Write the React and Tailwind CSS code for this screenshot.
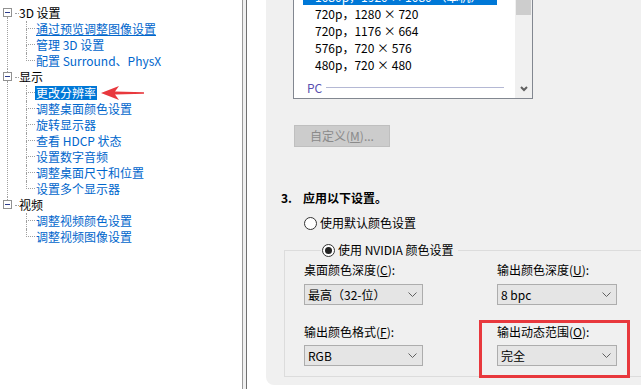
import React from 'react';

const tree = [
  {
    label: '3D 设置',
    children: [
      { text: '通过预览调整图像设置', hover: true },
      { text: '管理 3D 设置' },
      { text: '配置 Surround、PhysX' },
    ],
  },
  {
    label: '显示',
    children: [
      { text: '更改分辨率', selected: true },
      { text: '调整桌面颜色设置' },
      { text: '旋转显示器' },
      { text: '查看 HDCP 状态' },
      { text: '设置数字音频' },
      { text: '调整桌面尺寸和位置' },
      { text: '设置多个显示器' },
    ],
  },
  {
    label: '视频',
    children: [{ text: '调整视频颜色设置' }, { text: '调整视频图像设置' }],
  },
];

const modes = ['720p，1280 × 720', '720p，1176 × 664', '576p，720 × 576', '480p，720 × 480'];

const RedArrow = () => (
  <svg width="44" height="16" viewBox="0 0 44 16" className="ml-[4px] shrink-0">
    <path d="M0 8 L18 1 L14 6.5 L43 7.3 L43 8.7 L14 9.5 L18 15 Z" fill="#e8383d" />
  </svg>
);

const Chevron = () => (
  <svg width="9" height="6" viewBox="0 0 9 6">
    <polyline points="0.5,0.5 4.5,4.5 8.5,0.5" fill="none" stroke="#606060" strokeWidth="1" />
  </svg>
);

const TreeView = () => (
  <div className="pt-[5px] text-[12px] leading-[16px]">
    {tree.map((node, i) => {
      const last = i === tree.length - 1;
      return (
        <div key={node.label} className="flex">
          <div className="w-[15px] shrink-0 flex flex-col items-center">
            <div className={`h-[3px] w-px ${i > 0 ? 'border-l border-dotted border-[#a0a0a0]' : ''}`} />
            <div className="w-[9px] h-[9px] border border-[#919191] bg-white flex items-center justify-center">
              <div className="w-[5px] h-px bg-[#2d3c8c]" />
            </div>
            <div className={`flex-1 w-px ${last ? '' : 'border-l border-dotted border-[#a0a0a0]'}`} />
          </div>
          <div className="flex-1 flex flex-col">
            <div className="h-[16px] flex items-center">
              <div className="w-[4px] border-t border-dotted border-[#a0a0a0]" />
              <span className="text-black">{node.label}</span>
            </div>
            {node.children.map((c, j) => {
              const lastChild = j === node.children.length - 1;
              return (
                <div key={c.text} className="h-[16px] flex">
                  <div className="w-[11px] shrink-0" />
                  <div className="w-[9px] shrink-0 flex flex-col">
                    <div className="h-[8px] border-l border-b border-dotted border-[#a0a0a0]" />
                    <div className={`flex-1 ${lastChild ? '' : 'border-l border-dotted border-[#a0a0a0]'}`} />
                  </div>
                  <div className="flex items-center">
                    {c.selected ? (
                      <>
                        <span className="h-[14px] leading-[14px] px-px bg-[#0078d7] text-white">{c.text}</span>
                        <RedArrow />
                      </>
                    ) : (
                      <span className={`ml-px text-[#0066cc] whitespace-nowrap ${c.hover ? 'underline' : ''}`}>
                        {c.text}
                      </span>
                    )}
                  </div>
                </div>
              );
            })}
          </div>
        </div>
      );
    })}
  </div>
);

const Select = ({ value, width, gap = 'mt-[6px]' }) => (
  <div
    className={`${width} ${gap} h-[21px] flex items-center justify-between border border-[#adadad] bg-[#e5e5e5] pl-[3px] pr-[5px] text-black`}
  >
    <span>{value}</span>
    <Chevron />
  </div>
);

const Field = ({ label, hotkey, value, width, gap }) => (
  <div className="flex flex-col">
    <div className="h-[16px]">
      {label}(<span className="underline">{hotkey}</span>):
    </div>
    <Select value={value} width={width} gap={gap} />
  </div>
);

const Radio = ({ checked, label }) => (
  <div className="flex items-center h-[16px]">
    <div className="w-[13px] h-[13px] rounded-full border border-[#333] bg-white flex items-center justify-center">
      {checked && <div className="w-[7px] h-[7px] rounded-full bg-[#222]" />}
    </div>
    <span className="ml-[3px] text-black">{label}</span>
  </div>
);

export default function App() {
  return (
    <div className="w-[641px] h-[389px] overflow-hidden flex bg-white font-['Noto_Sans_CJK_SC',sans-serif] text-[12px] leading-[16px]">
      <div className="w-[243px] shrink-0 bg-white border-r border-[#9a9a9a]">
        <TreeView />
      </div>
      <div className="w-[3px] shrink-0 bg-[#f0f0f0]" />
      <div className="w-px shrink-0 bg-[#707070]" />
      <div className="flex-1 pl-[19px] bg-white">
        <div className="h-[385px] bg-[#f0f0f0] rounded-bl-[8px] flex flex-col">
          <div className="ml-[27px] w-[240px] h-[99px] shrink-0 bg-white border-x border-b border-[#828790] flex">
            <div className="flex-1 overflow-hidden pl-[9px] flex flex-col">
              <div className="-mt-[12px] h-[17px] shrink-0 w-[194px] bg-[#0078d7] text-white pl-[12px] leading-[17px] whitespace-nowrap">
                1080p，1920 × 1080 （本机）
              </div>
              {modes.map((m) => (
                <div key={m} className="h-[17px] shrink-0 pl-[12px] leading-[17px] text-black whitespace-nowrap">
                  {m}
                </div>
              ))}
              <div className="mt-[6px] h-[17px] shrink-0 flex items-center pl-[4px] pr-[11px]">
                <span className="text-[#5a4fb0]">PC</span>
                <div className="flex-1 h-px ml-[4px] bg-[#b4b8d4]" />
              </div>
            </div>
            <div className="w-[17px] shrink-0 bg-[#f0f0f0] flex flex-col">
              <div className="h-[15px] mx-px bg-[#cdcdcd]" />
              <div className="flex-1" />
              <div className="h-[19px] flex items-center justify-center">
                <svg width="8" height="6" viewBox="0 0 8 6">
                  <polyline points="1,1 4,4 7,1" fill="none" stroke="#606060" strokeWidth="2" />
                </svg>
              </div>
            </div>
          </div>

          <div className="ml-[28px] mt-[26px] w-[96px] h-[22px] shrink-0 flex items-center justify-center bg-[#cccccc] border border-[#bfbfbf] text-[#8a8a8a]">
            自定义(<span className="underline">M</span>)...
          </div>

          <div className="ml-[15px] mt-[43px] h-[16px] flex font-bold text-black">
            <span className="w-[22px]">3.</span>
            <span>应用以下设置。</span>
          </div>

          <div className="ml-[38px] mt-[9px]">
            <Radio label="使用默认颜色设置" />
          </div>

          <fieldset className="ml-[18px] mt-[11px] border-l border-t border-b border-[#dcdcdc] pl-[19px] pb-[10px]">
            <legend className="ml-[17px] pl-[1px] pr-[4px]">
              <Radio checked label="使用 NVIDIA 颜色设置" />
            </legend>
            <div className="flex mt-[4px]">
              <div className="w-[193px]">
                <Field label="桌面颜色深度" hotkey="C" value="最高（32-位）" width="w-[119px]" />
              </div>
              <Field label="输出颜色深度" hotkey="U" value="8 bpc" width="w-[120px]" />
            </div>
            <div className="flex mt-[19px]">
              <div className="w-[193px]">
                <Field label="输出颜色格式" hotkey="F" value="RGB" width="w-[119px]" gap="mt-[5px]" />
              </div>
              <div className="relative">
                <Field label="输出动态范围" hotkey="O" value="完全" width="w-[120px]" gap="mt-[5px]" />
                <div className="absolute -left-[18px] -top-[4px] w-[151px] h-[58px] border-[3px] border-[#e8383d]" />
              </div>
            </div>
          </fieldset>
        </div>
      </div>
    </div>
  );
}
